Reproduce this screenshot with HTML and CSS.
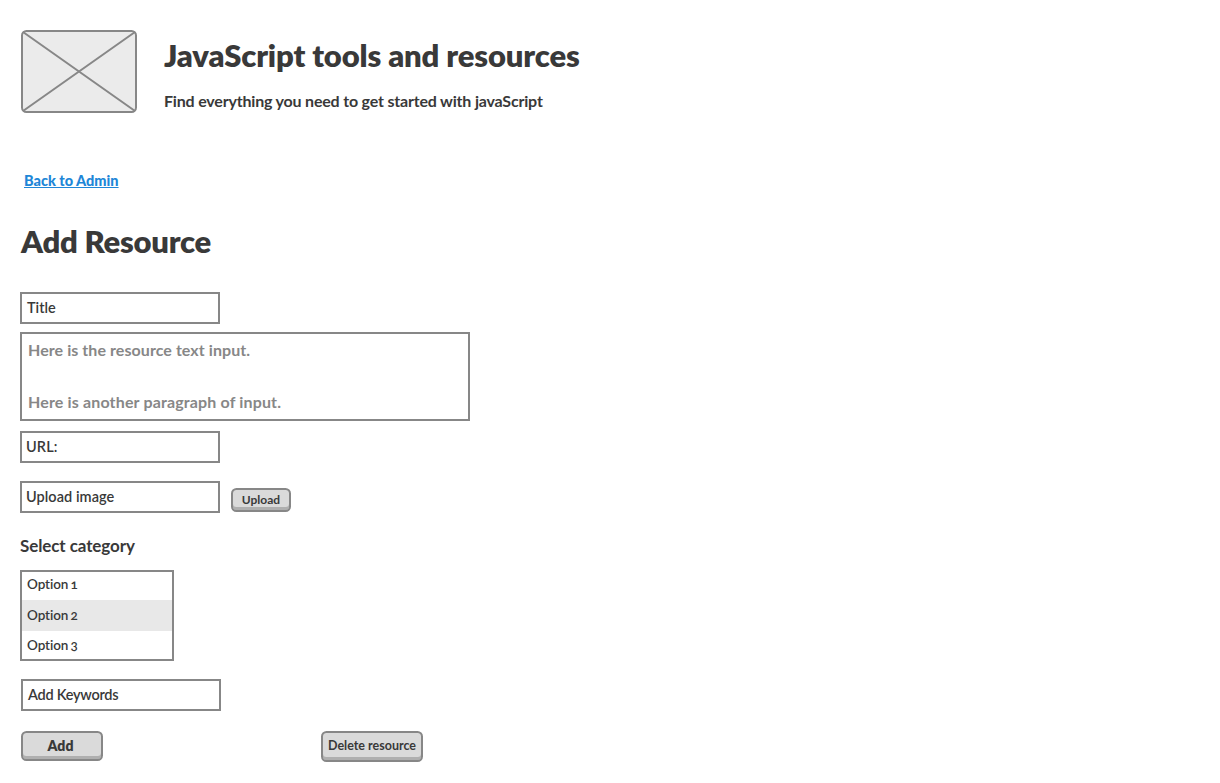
FILE: index.html
```html
<!DOCTYPE html>
<html lang="en">
<head>
<meta charset="utf-8">
<title>Add Resource</title>
<link rel="stylesheet" href="styles.css">
</head>
<body>
<header class="header">
  <svg class="logo" width="116" height="83" viewBox="0 0 116 83">
    <rect x="1" y="1" width="114" height="81" rx="4.5" fill="#ebebeb" stroke="#878787" stroke-width="2"/>
    <path d="M2 2L114 81M114 2L2 81" stroke="#878787" stroke-width="2" fill="none"/>
  </svg>
  <div class="intro">
    <h1 class="site-title">JavaScript tools and resources</h1>
    <p class="tagline">Find everything you need to get started with javaScript</p>
  </div>
</header>
<main class="main">
  <a class="back" href="#">Back to Admin</a>
  <h2 class="page-title">Add Resource</h2>
  <form class="form">
    <div class="field">Title</div>
    <div class="textarea">
      <p class="line-one">Here is the resource text input.</p>
      <p class="line-two">Here is another paragraph of input.</p>
    </div>
    <div class="field field-url">URL:</div>
    <div class="upload-row">
      <div class="field field-upload">Upload image</div>
      <button class="button upload" type="button">Upload</button>
    </div>
    <h3 class="category-title">Select category</h3>
    <ul class="options">
      <li class="option">Option 1</li>
      <li class="option selected">Option 2</li>
      <li class="option last">Option 3</li>
    </ul>
    <div class="field field-keywords">Add Keywords</div>
    <div class="actions">
      <button class="button add" type="button">Add</button>
      <button class="button delete" type="button">Delete resource</button>
    </div>
  </form>
</main>
</body>
</html>
```
FILE: styles.css
```css
* { box-sizing: border-box; }
body {
  margin: 0;
  background: #fff;
  color: #393939;
  font-family: Lato, "Open Sans", sans-serif;
  font-weight: 700;
  white-space: nowrap;
}
h1, h2, h3, p, ul { margin: 0; padding: 0; }
.header { display: flex; gap: 27px; padding: 30px 0 0 21px; }
.logo { display: block; }
.intro { padding-top: 5px; }
.site-title { font-size: 31px; line-height: 40px; font-weight: 800; letter-spacing: -0.14px; }
.tagline { margin-top: 15px; font-size: 16px; line-height: 22px; letter-spacing: -0.19px; }
.main { display: flex; flex-direction: column; align-items: flex-start; padding: 58px 0 0 20px; }
.back { margin-left: 4px; font-size: 14.5px; line-height: 20px; font-weight: 900; color: #2086d7; text-underline-offset: 1px; text-decoration-thickness: 1px; text-decoration-skip-ink: none; }
.page-title { margin: 30px 0 0 1px; font-size: 31px; line-height: 40px; font-weight: 800; letter-spacing: -0.25px; }
.form { margin-top: 31px; }
.field { width: 200px; height: 32px; border: 2px solid #878787; padding: 4px 0 0 5px; font-size: 14.5px; line-height: 20px; font-weight: 600; }
.textarea { width: 450px; height: 89px; margin-top: 8px; border: 2px solid #878787; padding: 3px 0 0 6px; font-size: 16px; line-height: 26px; letter-spacing: 0.11px; color: #878787; }
.line-one { letter-spacing: 0.07px; }
.line-two { margin-top: 26px; letter-spacing: 0.15px; }
.field-url { margin-top: 10px; padding-left: 4px; letter-spacing: 0.1px; }
.upload-row { display: flex; align-items: flex-end; gap: 11px; margin-top: 18px; }
.field-upload { padding-left: 4px; letter-spacing: 0.05px; }
.button { display: flex; align-items: center; justify-content: center; margin: 0; border: 2px solid #878787; border-radius: 5.5px; background: #dadada; box-shadow: inset 0 -3px #afafaf; color: inherit; font-family: inherit; font-weight: 700; padding: 0 0 2px; }
.upload { width: 60px; height: 24px; margin-bottom: 1px; font-size: 12px; }
.category-title { margin-top: 21px; font-size: 17px; line-height: 24px; letter-spacing: -0.1px; }
.options { width: 154px; height: 91px; margin-top: 12px; border: 2px solid #878787; list-style: none; font-size: 13.5px; font-weight: 600; letter-spacing: -0.1px; word-spacing: -1px; font-variant-numeric: oldstyle-nums; }
.option { height: 28px; padding: 2px 0 0 5px; line-height: 20px; }
.selected { height: 31px; padding-top: 5px; background: #e8e8e8; }
.last { padding-top: 4px; }
.field-keywords { margin: 18px 0 0 1px; letter-spacing: -0.25px; }
.actions { display: flex; align-items: flex-start; gap: 218px; margin: 20px 0 0 1px; }
.add { width: 82px; height: 30px; font-size: 14px; font-weight: 800; padding-right: 3px; }
.delete { width: 102px; height: 31px; font-size: 12.5px; }
```
